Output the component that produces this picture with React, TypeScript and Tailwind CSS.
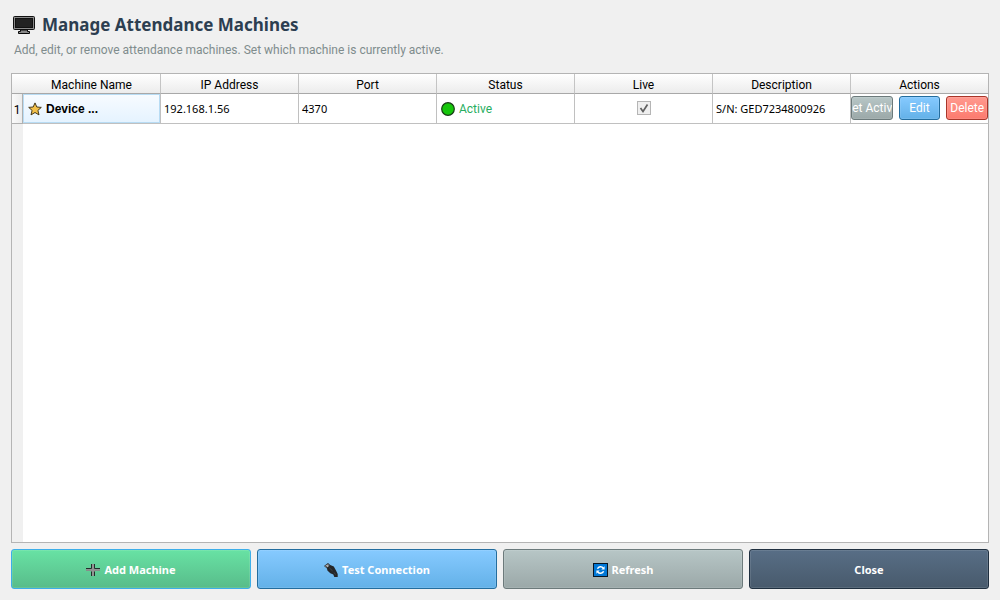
import { ReactNode } from "react";
import clsx from "clsx";

type Machine = {
  id: number;
  name: string;
  ip: string;
  port: number;
  active: boolean;
  live: boolean;
  description: string;
};

const machines: Machine[] = [
  {
    id: 1,
    name: "Device ...",
    ip: "192.168.1.56",
    port: 4370,
    active: true,
    live: true,
    description: "S/N: GED7234800926",
  },
];

const columns = ["Machine Name", "IP Address", "Port", "Status", "Live", "Description", "Actions"];

const tones = {
  green: "border-[#3daee9] from-[#68e2a4] to-[#58bc8a]",
  blue: "border-[#236d9e] from-[#86caff] to-[#63b1e8]",
  gray: "border-[#6c7a7b] from-[#b7c6c6] to-[#9ba8a8]",
  red: "border-[#a93529] from-[#ff998f] to-[#fc7a6e]",
  dark: "border-[#1f2f3f] from-[#586e86] to-[#485a6c]",
};

type Tone = keyof typeof tones;

const MonitorIcon = () => (
  <svg className="w-[22px] h-[18px] shrink-0" viewBox="0 0 22 18" aria-hidden="true">
    <rect x="0.5" y="0.5" width="21" height="13" rx="1" fill="#8b8b8b" stroke="#111" />
    <rect x="2.5" y="2.5" width="17" height="9" fill="#222" stroke="#111" />
    <path d="M7.500 14h7v1.500h2v2h-11v-2h2z" fill="#888" stroke="#090909" />
  </svg>
);

const StarIcon = () => (
  <svg className="w-[14px] h-[14px] shrink-0" viewBox="0 0 14 14" aria-hidden="true">
    <path
      d="M7 .9 8.8 5l4.5.4-3.4 3 1.1 4.5L7 10.5l-4 2.4 1.1-4.5-3.4-3L5.2 5z"
      fill="#f2c14b"
      stroke="#45391b"
      strokeLinejoin="round"
    />
  </svg>
);

const ActiveDot = () => (
  <svg className="w-[14px] h-[14px] shrink-0" viewBox="0 0 14 14" aria-hidden="true">
    <circle cx="7" cy="7" r="6.3" fill="#16c60c" stroke="#163c14" strokeWidth="1.2" />
  </svg>
);

const PlusIcon = () => (
  <svg className="w-[14px] h-[14px] shrink-0" viewBox="0 0 14 14" aria-hidden="true">
    <path d="M5 1h4v4h5v3H9v5H5V8H0V5h5z" fill="#929292" />
    <path d="M5.5 1v4.5H0M8.5 1v4.5H14M5.5 13V8.5M8.5 13V8.5" fill="none" stroke="#20302a" />
    <path d="M0 7.5h5M9 7.5h5" stroke="#868e8a" />
  </svg>
);

const PlugIcon = () => (
  <svg className="w-[14px] h-[14px] shrink-0" viewBox="0 0 14 14" aria-hidden="true">
    <path d="M0 3 4 0l2.2 2 3.6 1.600 2.200 4 1.700 3.400V14h-3.400l-1-2.600-3-1.100L3.400 7.500 3 5.500z" fill="#242628" />
    <path d="m1 3 3-2 1.4 1.8-2.5 1.8z" fill="#b9bec2" />
    <path d="m2 2.8.6.8M3.7 1.7l.6.8" stroke="#222" />
    <path d="m5.3 4.8 3.2 3M10 9.5l1.5 2" stroke="#55595c" strokeWidth=".6" />
  </svg>
);

const RefreshIcon = () => (
  <svg className="w-[15px] h-[14px] shrink-0" viewBox="0 0 15 14" aria-hidden="true">
    <rect x="0.5" y="0.5" width="14" height="13" fill="#0078d7" stroke="#071523" />
    <path d="M4.5 5.7C5.5 3.3 8.7 3 10.2 5M10.6 8.3C9.6 10.7 6.3 11 4.8 9" fill="none" stroke="#fff" strokeWidth="1.5" />
    <path d="M11.6 3.2v3.3H8.3zM3.4 10.8V7.5h3.3z" fill="#fff" />
  </svg>
);

const BarButton = ({ tone, icon, children }: { tone: Tone; icon?: ReactNode; children: ReactNode }) => (
  <button
    type="button"
    className={clsx(
      "flex flex-1 h-10 items-center justify-center gap-1 rounded-[3px] border bg-linear-to-b inset-ring inset-ring-white/10 pt-0.5 font-['Noto_Sans',sans-serif] text-[11px] font-bold text-white",
      tones[tone]
    )}
  >
    {icon}
    <span>{children}</span>
  </button>
);

const RowButton = ({ tone, children }: { tone: Tone; children: ReactNode }) => (
  <button
    type="button"
    className={clsx(
      "flex flex-1 min-w-0 h-6 items-center justify-center overflow-hidden whitespace-nowrap rounded-[3px] border bg-linear-to-b inset-ring inset-ring-white/10 text-[12px] text-white",
      tones[tone]
    )}
  >
    <span>{children}</span>
  </button>
);

const cell = "border-r border-b border-[#c0c0c0] p-0 px-[3px]";
const dataText = "font-['Noto_Sans',sans-serif] text-[11px]";

const MachineRow = ({ machine }: { machine: Machine }) => (
  <tr className="h-[30px]">
    <th scope="row" className="border-r border-b border-[#b0b0b0] bg-linear-to-r from-[#fafafa] to-[#ececec] p-0 pt-0.5 font-normal">
      {machine.id}
    </th>
    <td className="h-[30px] border-r border-b border-[#c0c0c0] p-0">
      <div className="flex h-[29px] items-center gap-1 border border-[#b8dcf4] bg-linear-to-b from-[#f7fbff] to-[#e5f3ff] pl-1 font-['Liberation_Sans',sans-serif] font-bold">
        <StarIcon />
        {machine.name}
      </div>
    </td>
    <td className={clsx(cell, dataText)}>{machine.ip}</td>
    <td className={clsx(cell, dataText)}>{machine.port}</td>
    <td className={cell}>
      <div className="flex items-center gap-1 pl-px text-[#27ae60]">
        <ActiveDot />
        {machine.active ? "Active" : "Inactive"}
      </div>
    </td>
    <td className="border-r border-b border-[#c0c0c0] p-0 pb-0.5">
      <label className="relative mx-auto flex w-[14px] h-[14px]">
        <input
          type="checkbox"
          aria-label="Live"
          defaultChecked={machine.live}
          className="peer w-[14px] h-[14px] appearance-none border border-[#b5b5b5] bg-[#efefef]"
        />
        <svg className="pointer-events-none absolute inset-0 hidden peer-checked:block" viewBox="0 0 14 14" aria-hidden="true">
          <path d="M3.5 7 6 10.5l4.5-7" fill="none" stroke="#606060" strokeWidth="1.7" />
        </svg>
      </label>
    </td>
    <td className={clsx(cell, dataText)}>{machine.description}</td>
    <td className="border-r border-b border-r-[#b4b4b4] border-b-[#c0c0c0] p-0 pb-0.5">
      <div className="flex items-center gap-1.5">
        <RowButton tone="gray">Set Active</RowButton>
        <RowButton tone="blue">Edit</RowButton>
        <RowButton tone="red">Delete</RowButton>
      </div>
    </td>
  </tr>
);

export default function App() {
  return (
    <main className="flex min-h-screen flex-col bg-[#f0f0f0] p-[11px] font-['Roboto',sans-serif] text-[12px] leading-4 text-black">
      <header>
        <h1 className="flex h-7 items-center gap-[7px] pl-0.5 font-['Noto_Sans',sans-serif] text-[17px] font-bold text-[#2c3e50]">
          <MonitorIcon />
          Manage Attendance Machines
        </h1>
        <p className="mt-[3px] pl-[3px] text-[#7f8c8d]">
          Add, edit, or remove attendance machines. Set which machine is currently active.
        </p>
      </header>

      <section className="mt-[15px] flex flex-1 flex-col border border-[#b4b4b4] bg-white">
        {/* one pixel wider, so the last column's border lies on the frame */}
        <table className="w-[calc(100%+1px)] table-fixed border-separate border-spacing-0">
          <thead>
            <tr className="h-5 bg-linear-to-b from-white to-[#ebebeb]">
              <td className="w-[11px] border-b border-[#a8a8a8] p-0" />
              {columns.map((column) => (
                <th
                  key={column}
                  scope="col"
                  className="border-r border-b border-r-[#c4c4c4] border-b-[#a8a8a8] p-0 pt-0.5 font-normal last:border-r-[#b4b4b4]"
                >
                  {column}
                </th>
              ))}
            </tr>
          </thead>
          <tbody>
            {machines.map((machine) => (
              <MachineRow key={machine.id} machine={machine} />
            ))}
          </tbody>
        </table>
        <div className="w-[11px] flex-1 bg-[#f0f0f0]" />
      </section>

      <footer className="mt-1.5 flex gap-1.5">
        <BarButton tone="green" icon={<PlusIcon />}>Add Machine</BarButton>
        <BarButton tone="blue" icon={<PlugIcon />}>Test Connection</BarButton>
        <BarButton tone="gray" icon={<RefreshIcon />}>Refresh</BarButton>
        <BarButton tone="dark">Close</BarButton>
      </footer>
    </main>
  );
}
